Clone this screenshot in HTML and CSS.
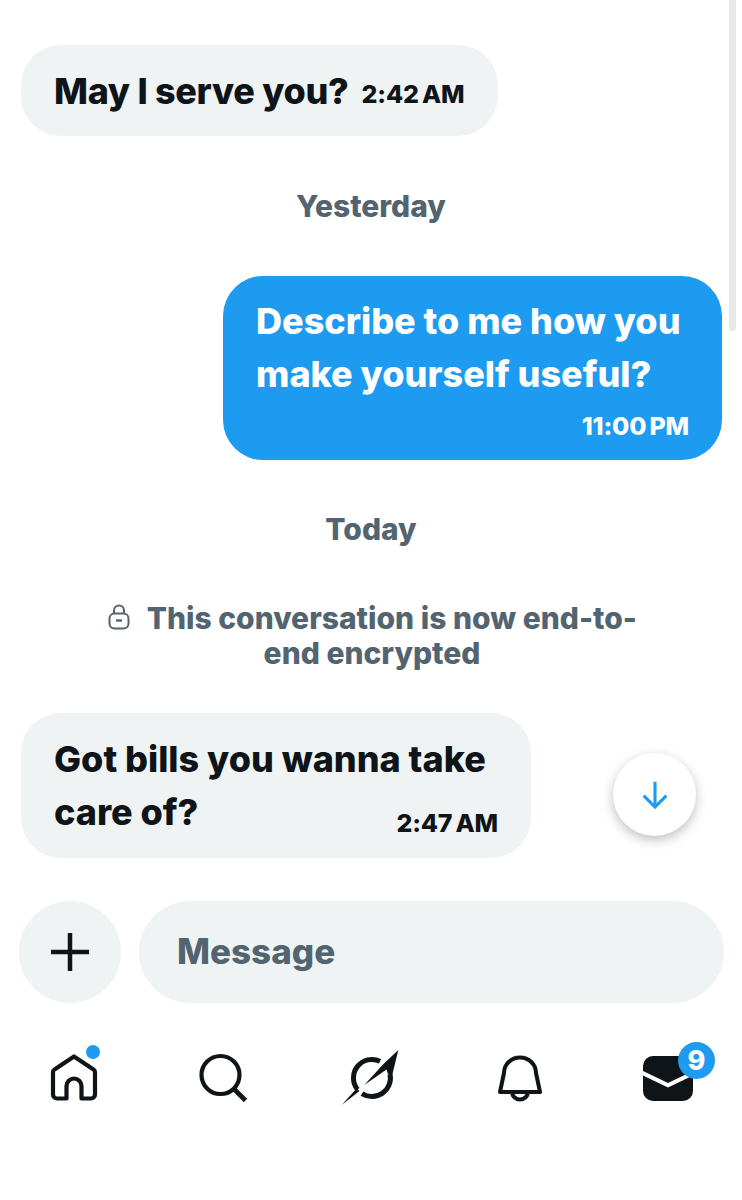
FILE: index.html
```html
<!DOCTYPE html>
<html lang="en">
<head>
    <meta charset="UTF-8">
    <meta name="viewport" content="width=device-width, initial-scale=1.0">
    <title>Messages</title>
    <link rel="stylesheet" href="styles.css">
</head>
<body>
    <div class="page">
        <div class="scrollbar"></div>

        <div class="chat">
            <div class="bubble received first">
                <span class="inline-text">May I serve you?</span>
                <span class="time">2:42 AM</span>
            </div>

            <div class="date date-yesterday">Yesterday</div>

            <div class="bubble sent">
                <p class="text">Describe to me how you<br>make yourself useful?</p>
                <div class="time time-right">11:00 PM</div>
            </div>

            <div class="date date-today">Today</div>

            <div class="notice">
                <svg class="lock" viewBox="0 0 24 28" width="24" height="28">
                    <path d="M7 11V7.500a5 5 0 0 1 10 0V11" fill="none" stroke="#536471" stroke-width="2"/>
                    <rect x="2.500" y="10.500" width="19" height="15" rx="5" fill="none" stroke="#536471" stroke-width="2"/>
                    <path d="M9 17.500h6" stroke="#536471" stroke-width="2.400"/>
                </svg>
                <span>This conversation is now end-to-<br>end encrypted</span>
            </div>

            <div class="bubble received last">
                <p class="text">Got bills you wanna take<br>care of?</p>
                <div class="time time-right time-up">2:47 AM</div>
            </div>
        </div>

        <!-- Scroll to bottom -->
        <div class="fab">
            <svg viewBox="0 0 24 24" width="32" height="32">
                <path d="M12 2v19M3.500 12.500 12 21l8.500-8.500" fill="none" stroke="#1d9bf0" stroke-width="2.300"/>
            </svg>
        </div>

        <div class="composer">
            <div class="plus">
                <svg viewBox="0 0 38 38" width="38" height="38">
                    <path d="M19 0v38M0 19h38" stroke="#0f1419" stroke-width="4.500"/>
                </svg>
            </div>
            <div class="input">Message</div>
        </div>

        <nav class="nav">
            <div class="nav-item">
                <svg viewBox="0 0 50 50" width="50" height="50">
                    <path d="M25 3.500 5.500 16.500a3 3 0 0 0-1.500 2.500v22.500a4 4 0 0 0 4 4h9.500V33a7.500 7.500 0 0 1 15 0v12.500h9.500a4 4 0 0 0 4-4V19a3 3 0 0 0-1.500-2.500z" fill="none" stroke="#0f1419" stroke-width="4.200" stroke-linejoin="round"/>
                </svg>
                <span class="dot"></span>
            </div>
            <div class="nav-item">
                <svg viewBox="0 0 50 50" width="50" height="50">
                    <circle cx="22.500" cy="22" r="19" fill="none" stroke="#0f1419" stroke-width="4.200"/>
                    <path d="M36 36 47.500 47.500" stroke="#0f1419" stroke-width="4.600"/>
                </svg>
            </div>
            <div class="nav-item">
                <svg viewBox="0 1 60 60" width="60" height="60">
                    <path d="M39 14.300A18.500 18.500 0 0 0 16.500 42.500" fill="none" stroke="#0f1419" stroke-width="5"/>
                    <path d="M21 46.600A18.500 18.500 0 0 0 49 27" fill="none" stroke="#0f1419" stroke-width="5"/>
                    <path d="M0.700 58 15.500 41.500 18.500 44z" fill="#0f1419"/>
                    <path d="M57.300 3 51.500 27 47 27 45.500 22.500 23.300 38 42 17.500z" fill="#0f1419"/>
                </svg>
            </div>
            <div class="nav-item">
                <svg viewBox="0 0 50 50" width="50" height="50">
                    <path d="M5 39 9 20a16 15.500 0 0 1 32 0L45 39z" fill="none" stroke="#0f1419" stroke-width="4" stroke-linejoin="round"/>
                    <path d="M17 39a8 7.500 0 0 0 16 0" fill="none" stroke="#0f1419" stroke-width="4"/>
                </svg>
            </div>
            <div class="nav-item">
                <svg viewBox="0 0 50 46" width="50" height="46">
                    <path d="M10 1h30a10 10 0 0 1 10 10v5L25 28 0 16v-5A10 10 0 0 1 10 1z" fill="#0f1419"/>
                    <path d="M0 20.500 25 32.500 50 20.500V36a10 10 0 0 1-10 10H10A10 10 0 0 1 0 36z" fill="#0f1419"/>
                </svg>
                <span class="badge">9</span>
            </div>
        </nav>
    </div>
</body>
</html>
```

FILE: styles.css
```css
* {
    box-sizing: border-box;
}

body {
    margin: 0;
    background-color: #fff;
    font-family: Inter, "Liberation Sans", sans-serif;
    font-weight: 800;
    color: #0f1419;
}

.page {
    position: relative;
    width: 742px;
    height: 1200px;
    overflow: hidden;
    padding-top: 45px;
}

.scrollbar {
    position: absolute;
    top: 0;
    left: 729px;
    width: 7px;
    height: 331px;
    background-color: #e8e8e8;
    border-radius: 0 0 4px 4px;
}

.chat {
    display: flex;
    flex-direction: column;
    padding: 0 20px 0 21px;
}

.bubble {
    padding: 0 33px;
    border-radius: 40px;
}

.received {
    align-self: flex-start;
    background-color: #eff3f4;
}

.sent {
    align-self: flex-end;
    width: 499px;
    height: 184px;
    padding-top: 19px;
    background-color: #1d9bf0;
    color: #fff;
}

.first {
    display: flex;
    align-items: center;
    width: 477px;
    height: 91px;
}

.inline-text,
.text {
    font-size: 36px;
    letter-spacing: -0.3px;
    white-space: nowrap;
}

.text {
    margin: 0;
    line-height: 53px;
    letter-spacing: 0;
}

.time {
    font-size: 25px;
    letter-spacing: -0.2px;
    word-spacing: -2px;
    white-space: nowrap;
}

.first .time {
    margin: 6px 0 0 13px;
}

.time-right {
    text-align: right;
    line-height: 30px;
    margin-top: 10px;
}

.time-up {
    margin-top: -31px;
}

.date {
    text-align: center;
    font-size: 30px;
    line-height: 34px;
    color: #536471;
    margin-left: -21px;
    margin-right: -20px;
}

.date-yesterday {
    margin-top: 53px;
    margin-bottom: 53px;
}

.date-today {
    margin-top: 52px;
}

.notice {
    margin-top: 55px;
    margin-left: -19px;
    margin-right: -20px;
    text-align: center;
    font-size: 30px;
    line-height: 35px;
    color: #536471;
    white-space: nowrap;
}

.lock {
    vertical-align: -2px;
    margin-right: 9px;
}

.last {
    width: 510px;
    height: 145px;
    margin-top: 42px;
    padding-top: 20px;
}

.fab {
    position: absolute;
    top: 753px;
    left: 613px;
    width: 83px;
    height: 83px;
    display: flex;
    align-items: center;
    justify-content: center;
    background-color: #fff;
    border-radius: 50%;
    box-shadow: 0 4px 12px rgba(0, 0, 0, 0.25);
}

.composer {
    display: flex;
    align-items: center;
    gap: 18px;
    margin-top: 43px;
    padding: 0 18px 0 19px;
}

.plus {
    flex: none;
    width: 102px;
    height: 102px;
    display: flex;
    align-items: center;
    justify-content: center;
    background-color: #eff3f4;
    border-radius: 50%;
}

.input {
    width: 585px;
    height: 102px;
    padding-left: 38px;
    line-height: 101px;
    font-size: 35px;
    color: #536471;
    background-color: #eff3f4;
    border-radius: 52px;
}

.nav {
    display: grid;
    grid-template-columns: repeat(5, 148.5px);
    margin-top: 45px;
}

.nav-item {
    position: relative;
    height: 60px;
    display: flex;
    align-items: center;
    justify-content: center;
}

.dot {
    position: absolute;
    top: -3px;
    left: 86px;
    width: 14px;
    height: 14px;
    background-color: #1d9bf0;
    border-radius: 50%;
}

.badge {
    position: absolute;
    top: -6px;
    left: 84px;
    width: 37px;
    height: 37px;
    line-height: 37px;
    text-align: center;
    font-size: 27px;
    color: #fff;
    background-color: #1d9bf0;
    border-radius: 50%;
}
```
